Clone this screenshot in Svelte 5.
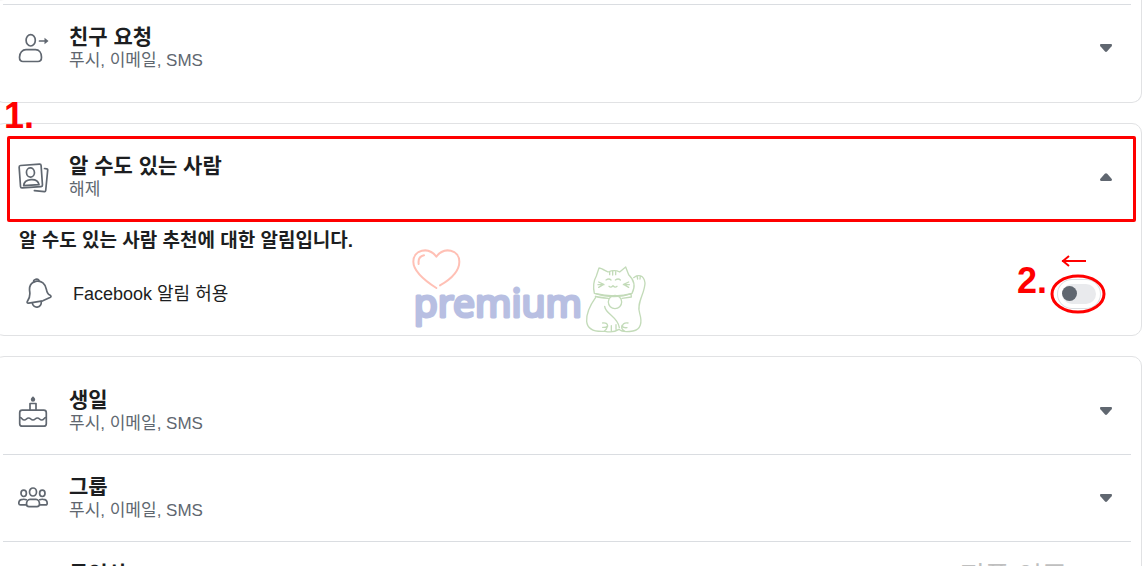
<script>
  const channels = '푸시, 이메일, SMS';
  let open = $state({ requests: false, people: true, birthday: false, groups: false, video: false });
  let allowed = $state(false);
</script>

{#snippet icon(id)}
  <svg class="icon" viewBox="0 0 32 32" aria-hidden="true">
    {#if id === 'requests'}
      <ellipse cx="12.7" cy="8.3" rx="4.6" ry="5.7" />
      <path d="M8 17.7h9.5c3.5 0 6 3 6 7.500c0 3-1 4.300-3.500 4.300H5c-2.500 0-3.500-1.300-3.500-4.300c0-4.500 3-7.500 6.500-7.500z" />
      <path d="M21.500 9h7" />
      <path class="solid" d="M26.500 5.800l4 3.200l-4 3.200z" />
    {:else if id === 'people'}
      <g transform="rotate(-4 12.700 15)">
        <rect x="1.800" y="3.800" width="22" height="22.500" rx="1.500" />
        <ellipse cx="12.700" cy="11.500" rx="4" ry="4.600" />
        <path d="M5 24.200c.5-4 3.400-5.600 7.700-5.600s7.200 1.600 7.700 5.600z" />
      </g>
      <path d="M26.500 7.500l2.200.3c.8.1 1.100.6 1 1.400l-2 20.300c-.1.800-.5 1.200-1.300 1.100l-10-1" />
    {:else if id === 'birthday'}
      <path class="solid" d="M15 1.200c1.500 1.400 2.200 2.300 2.200 3.300a2.200 2.200 0 0 1-4.400 0c0-1 .7-1.900 2.200-3.300z" />
      <path d="M12 15V8.500h6V15" />
      <rect x="1.700" y="15.200" width="26.600" height="16" rx="2.500" />
      <path d="M2 22.500c2 0 2 2.500 4.300 2.500s2-2 4.300-2s2.100 2 4.400 2s2.100-2 4.400-2s2 2 4.300 2s2.300-2.500 4.300-2.500" />
    {:else if id === 'groups'}
      <ellipse cx="15" cy="10" rx="3.500" ry="4" />
      <ellipse cx="5.700" cy="11.300" rx="2.700" ry="3.200" />
      <ellipse cx="24.300" cy="11.300" rx="2.700" ry="3.200" />
      <path d="M12 17.300h6c2 0 3.500 2 3.500 4.700c0 2-.8 2.600-2.500 2.600h-8c-1.700 0-2.500-.6-2.500-2.600c0-2.700 1.500-4.700 3.500-4.700z" />
      <path d="M8.300 17.700c-1-.5-2-.5-3.500-.4c-2.500 0-4 1.700-4 3.900c0 1.300.5 1.700 1.700 1.700h5M21.700 17.700c1-.5 2-.5 3.500-.4c2.500 0 4 1.700 4 3.900c0 1.300-.5 1.700-1.700 1.700h-5" />
    {:else}
      <rect x="2" y="6" width="20" height="20" rx="3" />
      <path d="M22 13l7-4v14l-7-4" />
    {/if}
  </svg>
{/snippet}

{#snippet row(id, title, status)}
  <button class="row" type="button" aria-expanded={open[id]} onclick={() => (open[id] = !open[id])}>
    {@render icon(id)}
    <span class="label">
      <span class="title">{title}</span>
      <span class="status">{status}</span>
    </span>
    <svg class="caret" class:up={open[id]} viewBox="0 0 12 8" aria-hidden="true">
      <path d="M1.200 0h9.600c1.200 0 1.500 1.400.8 2.200L7.200 7.200c-.8.900-1.600.9-2.400 0L.4 2.200C-.3 1.400 0 0 1.200 0z" />
    </svg>
  </button>
{/snippet}

<main class="page">
  <section class="card first">
    {@render row('requests', '친구 요청', channels)}
  </section>

  <section class="card">
    <div class="marked">
      {@render row('people', '알 수도 있는 사람', '해제')}
      <span class="step one">1.</span>
    </div>
    {#if open.people}
      <div class="details">
        <h2>알 수도 있는 사람 추천에 대한 알림입니다.</h2>
        <div class="setting">
          <svg class="bell" viewBox="0 0 26 31" aria-hidden="true">
            <path d="M7.500 4.300C4.300 6 3 9 3.700 13.500c.6 4 .2 6-2 9.300c-1 1.600-.7 2.500 1.100 2.300l14-2.300l7.200-3.300c1.400-.7 1.300-1.600-.2-2.400c-2-1-2.900-3-3.500-6C19.300 6 15.500 2.500 10.700 3.200c-1.200.2-2.200.5-3.200 1.100z" />
            <path d="M7.700 4.200c-.8-2.800 4.400-4.700 5.400-1.200M6.300 24.800c.4 3 2.500 4.700 5 4.300c2.500-.4 4.200-2.500 4-5.700" />
          </svg>
          <label for="allow">Facebook 알림 허용</label>
          <span class="switch">
            <input id="allow" type="checkbox" role="switch" bind:checked={allowed} />
            <span class="step two">2.</span>
            <svg class="ring" viewBox="0 0 56 66" aria-hidden="true">
              <ellipse cx="28" cy="46" rx="26" ry="18" />
              <path d="M12 13h24M19 8l-6 5l6 5" />
            </svg>
          </span>
        </div>
      </div>
    {/if}
    <svg class="brand" viewBox="0 0 780 300" role="img" aria-label="premium">
      <path class="heart" d="M109 144C72 120 40 92 40 65C40 30 85 18 109 50C133 18 178 30 178 65C178 92 155 116 120 136M56 72C54 57 61 48 72 46" />
      <text x="41" y="231">premium</text>
      <g class="cat">
        <path d="M583 160C578 137 580 124 589 108L597 84C604 84 614 91 624 96C636 91 650 91 659 96L677 81L686 104C704 121 707 139 696 160C664 170 618 168 583 160z" />
        <path d="M629 95v9M638 93v12M647 95v9M618 120q9-6 15 0M646 120q9-6 15 0M596 126l15 7l-15 9M594 134h18M686 126l-15 7l15 9M688 134h-18M627 139q6 6 12-2q6 8 12 2" />
        <path d="M587 161C620 173 664 173 693 161L694 171L666 175M625 175C610 174 597 173 586 169z" />
        <circle cx="645" cy="186" r="20" />
        <path d="M587 172C570 196 558 218 560 244C562 268 585 276 615 274C633 278 648 274 657 268C666 277 688 275 699 273C723 269 727 247 719 220C708 190 735 160 735 129C732 105 714 102 701 113M711 107l2 10M721 108l-1 9M614 199C616 222 654 230 658 263M608 249q14-2 15 9q-5 5-15 4M623 258q-4 12-10 15M634 257v15M648 254v14M684 249q-15-2-17 10q3 5 14 4M666 256q-4 12 8 17" />
      </g>
    </svg>
  </section>

  <section class="card last">
    {@render row('birthday', '생일', channels)}
    {@render row('groups', '그룹', channels)}
    {@render row('video', '동영상', channels)}
  </section>

  <p class="activation">정품 인증</p>
</main>

<style>
  :global(body) { background: #fff; }
  .page {
    position: relative;
    box-sizing: border-box;
    height: 100vh;
    overflow: hidden;
    padding-right: 5px;
    display: flex;
    flex-direction: column;
    gap: 20px;
    font-family: "Liberation Sans", "Noto Sans CJK KR", sans-serif;
    color: #1c1e21;
  }
  .card {
    position: relative;
    flex: none;
    margin-left: -6px;
    padding: 10px 10px 10px 8px;
    border: 1px solid #e1e2e4;
    border-radius: 10px;
  }
  .first {
    padding-top: 4px;
    padding-bottom: 11px;
    border-top: 0;
    border-top-right-radius: 0;
  }
  .last { padding-top: 11px; }
  .first .row, .row + :global(.row) { border-top: 1px solid #dadde1; }
  .row {
    box-sizing: content-box;
    display: flex;
    align-items: center;
    width: calc(100% - 34px);
    height: 86px;
    padding: 0 19px 0 15px;
    border: 0;
    background: none;
    font: inherit;
    color: inherit;
    text-align: left;
    cursor: pointer;
  }
  .icon { width: 32px; height: 32px; margin-right: 19px; }
  .icon, .bell { flex: none; fill: none; stroke: #606770; stroke-width: 1.7; stroke-linecap: round; stroke-linejoin: round; }
  .icon .solid { fill: #606770; stroke: none; }
  .label { flex: 1; display: flex; flex-direction: column; }
  .title { font-size: 21px; line-height: 25px; font-weight: 700; }
  .status { font-size: 17px; line-height: 24px; color: #606770; }
  .caret { width: 12px; height: 8px; fill: #606770; }
  .up { transform: rotate(180deg); }
  .marked { position: relative; }
  .marked::after {
    content: "";
    position: absolute;
    inset: 2px -5px -2px 4px;
    border: 3px solid #f00;
    border-radius: 2px;
    pointer-events: none;
  }
  .step { position: absolute; font-size: 36px; line-height: 36px; font-weight: 700; color: #f00; pointer-events: none; }
  .one { left: 1px; top: -36px; }
  .details { padding: 7px 24px 5px 16px; }
  h2 { margin: 0; font-size: 19px; line-height: 28px; font-weight: 700; }
  .setting { display: flex; align-items: center; padding: 12px 11px 0 7px; height: 53px; }
  .bell { width: 26px; height: 31px; margin-right: 21px; }
  label { flex: 1; font-size: 18px; line-height: 28px; }
  .switch { position: relative; display: flex; }
  input {
    appearance: none;
    width: 34px;
    height: 20px;
    margin: 0;
    border-radius: 10px;
    background: #e9eaed;
    box-shadow: 0 0 0 4px #fff, 0 0 0 5px #dadde1;
    cursor: pointer;
  }
  input::before {
    content: "";
    display: block;
    width: 15px;
    height: 15px;
    margin-top: 2px;
    border-radius: 50%;
    background: #606770;
  }
  input:checked::before { margin-left: 19px; }
  .two { left: -45px; top: -21px; }
  .ring { position: absolute; left: -12px; top: -36px; width: 56px; height: 66px; fill: none; stroke: #f00; stroke-width: 3; pointer-events: none; }
  .ring path { stroke-width: 2; }
  .brand { position: absolute; left: 405px; top: 116px; width: 260px; height: 100px; fill: none; stroke-linecap: round; stroke-linejoin: round; pointer-events: none; }
  .heart { stroke: #ffc0b5; stroke-width: 6; }
  .brand text { font: 117px "Noto Sans", sans-serif; fill: #b8bfe2; stroke: #b8bfe2; stroke-width: 9; }
  .cat { stroke: #c3dbb9; stroke-width: 4; }
  .activation { position: absolute; left: 960px; top: 100%; margin: -7px 0 0; font-size: 27px; line-height: 36px; color: #bfbfbf; white-space: nowrap; }
</style>
